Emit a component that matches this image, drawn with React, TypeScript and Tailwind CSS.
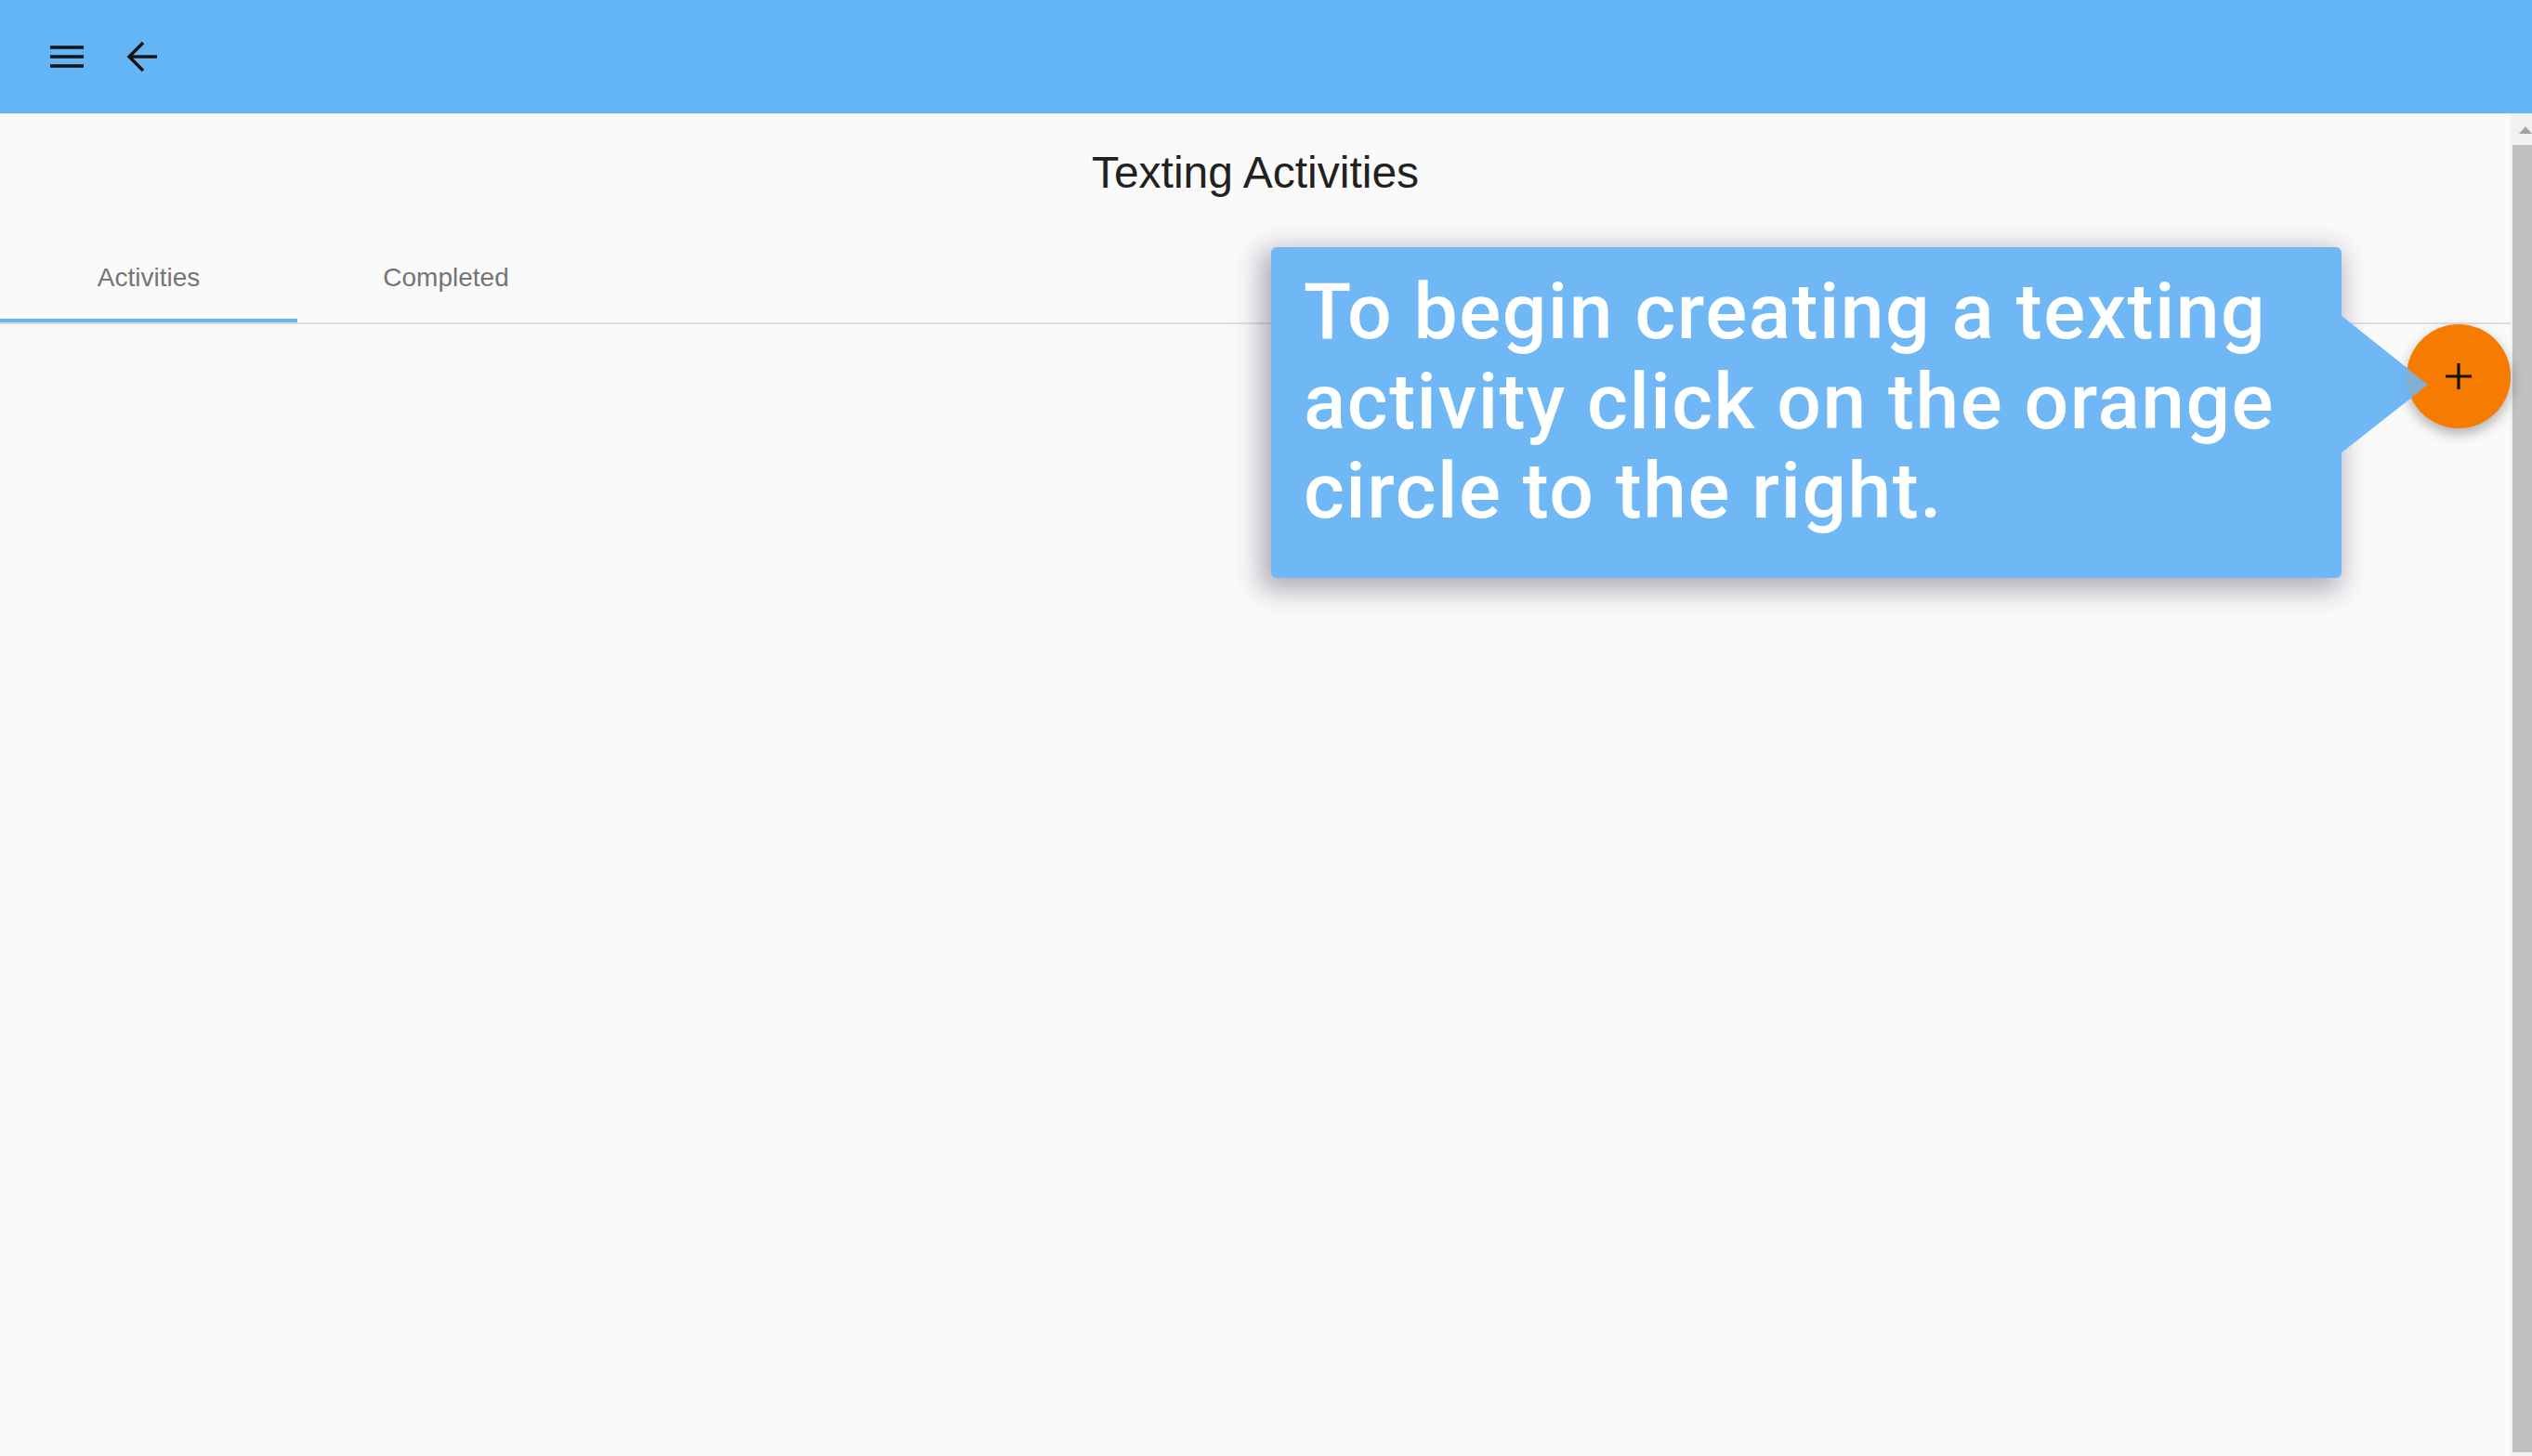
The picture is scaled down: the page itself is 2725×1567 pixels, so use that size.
import React from "react";

function MenuIcon() {
  return (
    <svg width={48} height={48} viewBox="0 0 24 24" fill="none" stroke="#111" strokeWidth={1.7}>
      <path d="M3 7h18M3 12h18M3 17h18" />
    </svg>
  );
}

function BackIcon() {
  return (
    <svg width={48} height={48} viewBox="0 0 24 24" fill="none" stroke="#111" strokeWidth={1.7} strokeLinejoin="miter">
      <path d="M20 12H5" />
      <path d="M12.5 4.5 5 12l7.5 7.5" />
    </svg>
  );
}

function Tab({ label, active }: { label: string; active?: boolean }) {
  return (
    <div className="relative flex h-[97px] w-[320px] items-center justify-center">
      <span className="font-['Liberation_Sans',Arial,sans-serif] text-[28px] leading-[28px] text-[#757575]">
        {label}
      </span>
      {active && <div className="absolute bottom-0 left-0 right-0 h-[4px] bg-[#64b5f6]" />}
    </div>
  );
}

export default function App() {
  return (
    <div className="flex h-[1567px] w-[2725px] flex-col overflow-hidden bg-[#fafafa]">
      {/* app bar */}
      <header className="flex h-[122px] shrink-0 items-center bg-[#64b5f6] pl-[48px]">
        <MenuIcon />
        <div className="ml-[33px]">
          <BackIcon />
        </div>
      </header>

      <div className="flex min-h-0 flex-1">
        <main className="relative flex flex-1 flex-col">
          <h1 className="mt-[40px] text-center font-['Liberation_Sans',Arial,sans-serif] text-[48px] font-normal leading-[48px] text-[#212121]">
            Texting Activities
          </h1>

          <div className="mt-[40px] flex">
            <Tab label="Activities" active />
            <Tab label="Completed" />
          </div>
          <div className="h-[2px] bg-[#dedede]" />

          {/* walkthrough tooltip */}
          <div className="absolute left-[1368px] top-[144px] h-[356px] w-[1152px] rounded-[6px] bg-[#6fb8f5] pl-[35px] pt-[22px] font-['Roboto',sans-serif] text-[84px] font-medium leading-[96.5px] tracking-[1.5px] text-white shadow-[-6px_8px_28px_6px_rgba(40,35,70,0.35)]">
            To begin creating a texting
            <br />
            activity click on the orange
            <br />
            circle to the right.
          </div>
          <svg className="absolute left-[2520px] top-[218px]" width={94} height={148} viewBox="0 0 94 148">
            <polygon points="0,0 93,74 0,147" fill="#6fb8f5" />
          </svg>

          {/* add button */}
          <button className="absolute left-[2590px] top-[227px] flex h-[112px] w-[112px] items-center justify-center rounded-full bg-[#f57c00] shadow-[0_6px_14px_rgba(0,0,0,0.3)]">
            <svg width={28} height={28} viewBox="0 0 28 28" stroke="#1a1000" strokeWidth={3.2}>
              <path d="M14 0v28M0 14h28" />
            </svg>
          </button>
          <svg className="absolute left-[2520px] top-[218px] opacity-[0.85]" width={94} height={148} viewBox="0 0 94 148">
            <polygon points="0,0 93,74 0,147" fill="#6fb8f5" />
          </svg>
        </main>

        {/* scrollbar */}
        <div className="flex w-[23px] shrink-0 flex-col bg-[#f1f1f1]">
          <div className="h-[34px] pl-[9px] pt-[14px]">
            <svg width={14} height={8} viewBox="0 0 14 8">
              <polygon points="7,0 14,8 0,8" fill="#a3a3a3" />
            </svg>
          </div>
          <div className="mb-[4px] ml-[2px] flex-1 bg-[#c1c1c1]" />
        </div>
      </div>
    </div>
  );
}
